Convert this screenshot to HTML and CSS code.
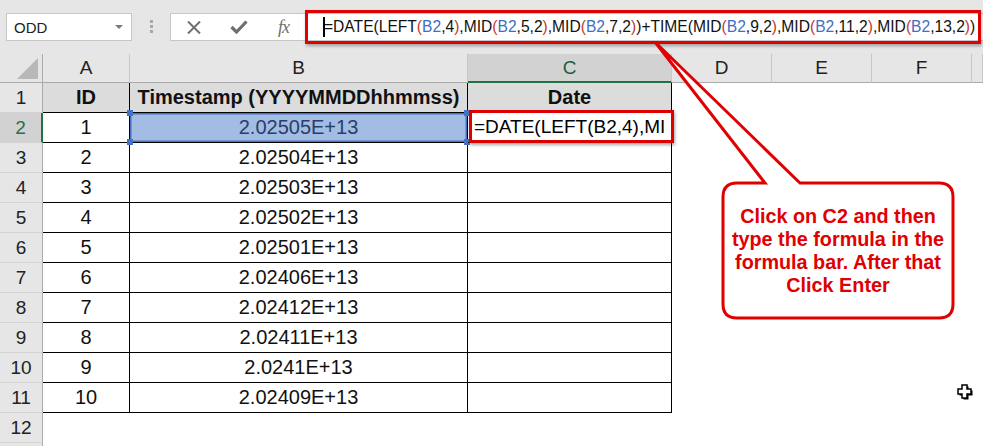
FILE: index.html
```html
<!DOCTYPE html>
<html>
<head>
  <meta charset="UTF-8">
  <title>Timestamp to Date</title>
  <link rel="stylesheet" href="styles.css">
</head>

<body>
  <div class="app">

    <!-- name box + formula bar -->
    <div class="topbar">
      <div class="namebox">
        <span>ODD</span>
        <span class="dropdown"></span>
      </div>
      <div class="grip"><i></i><i></i><i></i></div>
      <div class="fxbar">
        <div class="fx-btn">
          <svg width="14" height="13" viewBox="0 0 14 13"><path d="M1 0.5 L13 12.5 M13 0.5 L1 12.5" stroke="#6f6f6f" stroke-width="2" fill="none"/></svg>
        </div>
        <div class="fx-btn">
          <svg width="18" height="14" viewBox="0 0 18 14"><path d="M1.5 7 L6.5 12 L16.5 1.5" stroke="#6f6f6f" stroke-width="3.2" fill="none"/></svg>
        </div>
        <div class="fx-btn fx-label">fx</div>
        <div class="fx-input">
          <span class="text-cursor"></span>=DATE(LEFT<span class="r">(</span><span class="b">B2</span>,4<span class="r">)</span>,MID<span class="r">(</span><span class="b">B2</span>,5,2<span class="r">)</span>,MID<span class="r">(</span><span class="b">B2</span>,7,2<span class="r">)</span>)+TIME(MID<span class="r">(</span><span class="b">B2</span>,9,2<span class="r">)</span>,MID<span class="r">(</span><span class="b">B2</span>,11,2<span class="r">)</span>,MID<span class="r">(</span><span class="b">B2</span>,13,2<span class="r">)</span>)
        </div>
      </div>
    </div>

    <!-- grid -->
    <div class="sheet">
      <div class="ch corner"><span class="tri"></span></div>
      <div class="ch">A</div>
      <div class="ch">B</div>
      <div class="ch active">C</div>
      <div class="ch">D</div>
      <div class="ch">E</div>
      <div class="ch">F</div>
      <div class="ch"></div>

      <div class="rh">1</div>
      <div class="td head">ID</div>
      <div class="td head">Timestamp (YYYYMMDDhhmmss)</div>
      <div class="td head">Date</div>
      <div></div><div></div><div></div><div></div>

      <div class="rh active">2</div>
      <div class="td">1</div>
      <div class="td picked">2.02505E+13<i class="h tl"></i><i class="h tr"></i><i class="h bl"></i><i class="h br"></i></div>
      <div class="td editing"><div class="editor">=DATE(LEFT(B2,4),MI</div></div>
      <div></div><div></div><div></div><div></div>

      <div class="rh">3</div>
      <div class="td">2</div>
      <div class="td">2.02504E+13</div>
      <div class="td"></div>
      <div></div><div></div><div></div><div></div>

      <div class="rh">4</div>
      <div class="td">3</div>
      <div class="td">2.02503E+13</div>
      <div class="td"></div>
      <div></div><div></div><div></div><div></div>

      <div class="rh">5</div>
      <div class="td">4</div>
      <div class="td">2.02502E+13</div>
      <div class="td"></div>
      <div></div><div></div><div></div><div></div>

      <div class="rh">6</div>
      <div class="td">5</div>
      <div class="td">2.02501E+13</div>
      <div class="td"></div>
      <div></div><div></div><div></div><div></div>

      <div class="rh">7</div>
      <div class="td">6</div>
      <div class="td">2.02406E+13</div>
      <div class="td"></div>
      <div></div><div></div><div></div><div></div>

      <div class="rh">8</div>
      <div class="td">7</div>
      <div class="td">2.02412E+13</div>
      <div class="td"></div>
      <div></div><div></div><div></div><div></div>

      <div class="rh">9</div>
      <div class="td">8</div>
      <div class="td">2.02411E+13</div>
      <div class="td"></div>
      <div></div><div></div><div></div><div></div>

      <div class="rh">10</div>
      <div class="td">9</div>
      <div class="td">2.0241E+13</div>
      <div class="td"></div>
      <div></div><div></div><div></div><div></div>

      <div class="rh">11</div>
      <div class="td">10</div>
      <div class="td">2.02409E+13</div>
      <div class="td"></div>
      <div></div><div></div><div></div><div></div>

      <div class="rh">12</div>
      <div></div><div></div><div></div><div></div><div></div><div></div><div></div>

      <div class="rh"></div>
      <div></div><div></div><div></div><div></div><div></div><div></div><div></div>
    </div>

    <!-- annotation callout -->
    <svg class="callout" width="983" height="446" viewBox="0 0 983 446">
      <path d="M737 183 L765 183 L655 42 L800 183 L939 183 Q953 183 953 197 L953 304 Q953 318 939 318 L737 318 Q723 318 723 304 L723 197 Q723 183 737 183 Z"
            fill="#fff" stroke="#e00000" stroke-width="3" stroke-linejoin="miter"/>
    </svg>
    <div class="callout-text">Click on C2 and then<br>type the formula in the<br>formula bar. After that<br>Click Enter</div>

    <svg class="pointer" width="18" height="18" viewBox="0 0 18 18">
      <path d="M6 2 H11 V6 H15 V11 H11 V15 H6 V11 H2 V6 H6 Z" fill="#000" transform="translate(1.5,1.5)"/>
      <path d="M6 2 H11 V6 H15 V11 H11 V15 H6 V11 H2 V6 H6 Z" fill="#fff" stroke="#000" stroke-width="1.5"/>
    </svg>

  </div>
</body>

</html>
```

FILE: styles.css
```css
body {
  margin: 0;
  overflow: hidden;
  background-color: #e6e6e6;
  font-family: 'Liberation Sans', Arial, sans-serif;
  color: #111;
}

.app {
  position: relative;
  width: 983px;
  height: 446px;
  overflow: hidden;
}

/* ---- top bar ---- */
.topbar {
  display: flex;
  align-items: flex-start;
  height: 54px;
  padding: 13px 0 0 6px;
  box-sizing: border-box;
}

.namebox {
  display: flex;
  align-items: center;
  justify-content: space-between;
  width: 126px;
  height: 28px;
  box-sizing: border-box;
  padding: 0 8px 0 7px;
  background: #fff;
  border: 1px solid #c6c6c6;
  font-size: 15px;
  color: #222;
}

.dropdown {
  width: 0;
  height: 0;
  border-left: 4px solid transparent;
  border-right: 4px solid transparent;
  border-top: 4px solid #7a7a7a;
}

.grip {
  display: flex;
  flex-direction: column;
  align-items: center;
  gap: 2px;
  width: 38px;
  padding-top: 7px;
}

.grip i {
  width: 3px;
  height: 3px;
  background: #a8a8a8;
}

.fxbar {
  display: flex;
  align-items: center;
  flex: 1;
  height: 28px;
  box-sizing: border-box;
  margin-right: -20px;
  background: #fff;
  border: 1px solid #c6c6c6;
}

.fx-btn {
  display: flex;
  align-items: center;
  justify-content: center;
  width: 45px;
  height: 100%;
}

.fx-label {
  font-family: 'Liberation Serif', 'Times New Roman', serif;
  font-style: italic;
  font-size: 18px;
  color: #6f6f6f;
  letter-spacing: -1px;
}

.fx-input {
  position: relative;
  display: flex;
  align-items: center;
  width: 675px;
  height: 100%;
  box-sizing: border-box;
  padding-left: 17px;
  font-size: 15.6px;
  white-space: nowrap;
  color: #111;
}

.fx-input::after {
  content: "";
  position: absolute;
  top: -4px;
  bottom: -4px;
  left: -1px;
  right: 0;
  border: 3px solid #e00000;
  box-shadow: 1px 2px 3px rgba(0, 0, 0, 0.3);
}

.text-cursor {
  display: inline-block;
  width: 2px;
  height: 20px;
  margin-right: -1px;
  background: #000;
}

.r { color: #c0392b; }
.b { color: #3e6fc3; }

/* ---- sheet ---- */
.sheet {
  display: grid;
  grid-template-columns: 43px 87px 338px 204px 100px 100px 100px 1fr;
  grid-template-rows: 29px repeat(13, 30px);
  background: #fff;
}

.ch {
  display: flex;
  align-items: center;
  justify-content: center;
  background: #e6e6e6;
  border-right: 1px solid #c8c8c8;
  border-bottom: 1px solid #ababab;
  font-size: 19px;
  color: #222;
}

.ch.active {
  background: #d2d2d2;
  border-bottom: 2px solid #217346;
  color: #1e5e3a;
}

.corner {
  position: relative;
  border-right-color: #ababab;
}

.tri {
  position: absolute;
  right: 4px;
  bottom: 3px;
  width: 0;
  height: 0;
  border-left: 21px solid transparent;
  border-bottom: 21px solid #b8b8b8;
}

.rh {
  display: flex;
  align-items: center;
  justify-content: center;
  background: #e6e6e6;
  border-right: 1px solid #ababab;
  border-bottom: 1px solid #d4d4d4;
  font-size: 19px;
  color: #222;
}

.rh.active {
  background: #d2d2d2;
  border-right: 2px solid #217346;
  color: #217346;
}

.td {
  display: flex;
  align-items: center;
  justify-content: center;
  border-right: 1px solid #000;
  border-bottom: 1px solid #000;
  font-size: 20px;
  white-space: nowrap;
}

.td.head {
  background: #dcdcdc;
  font-weight: bold;
}

.td.picked {
  position: relative;
  background: #a3bce3;
  color: #26406b;
  box-shadow: inset 0 0 0 1.5px #4472c4;
}

.h {
  position: absolute;
  width: 6px;
  height: 6px;
  background: #4472c4;
}

.h.tl { left: -3px; top: -3px; }
.h.tr { right: -3px; top: -3px; }
.h.bl { left: -3px; bottom: -3px; }
.h.br { right: -3px; bottom: -3px; }

.td.editing {
  position: relative;
  justify-content: flex-start;
}

.editor {
  position: absolute;
  top: -3px;
  bottom: -1px;
  left: 1px;
  right: -3px;
  display: flex;
  align-items: center;
  padding-left: 2px;
  overflow: hidden;
  background: #fff;
  border: 3px solid #dd0000;
  box-shadow: 1px 2px 3px rgba(0, 0, 0, 0.35);
  font-size: 19px;
  color: #000;
}

/* ---- annotation ---- */
.callout {
  position: absolute;
  left: 0;
  top: 0;
  pointer-events: none;
}

.callout-text {
  position: absolute;
  left: 723px;
  top: 183px;
  width: 230px;
  height: 135px;
  display: flex;
  align-items: center;
  justify-content: center;
  text-align: center;
  font-weight: bold;
  font-size: 19.8px;
  line-height: 23px;
  color: #e00000;
}

.pointer {
  position: absolute;
  left: 956px;
  top: 383px;
}
```
